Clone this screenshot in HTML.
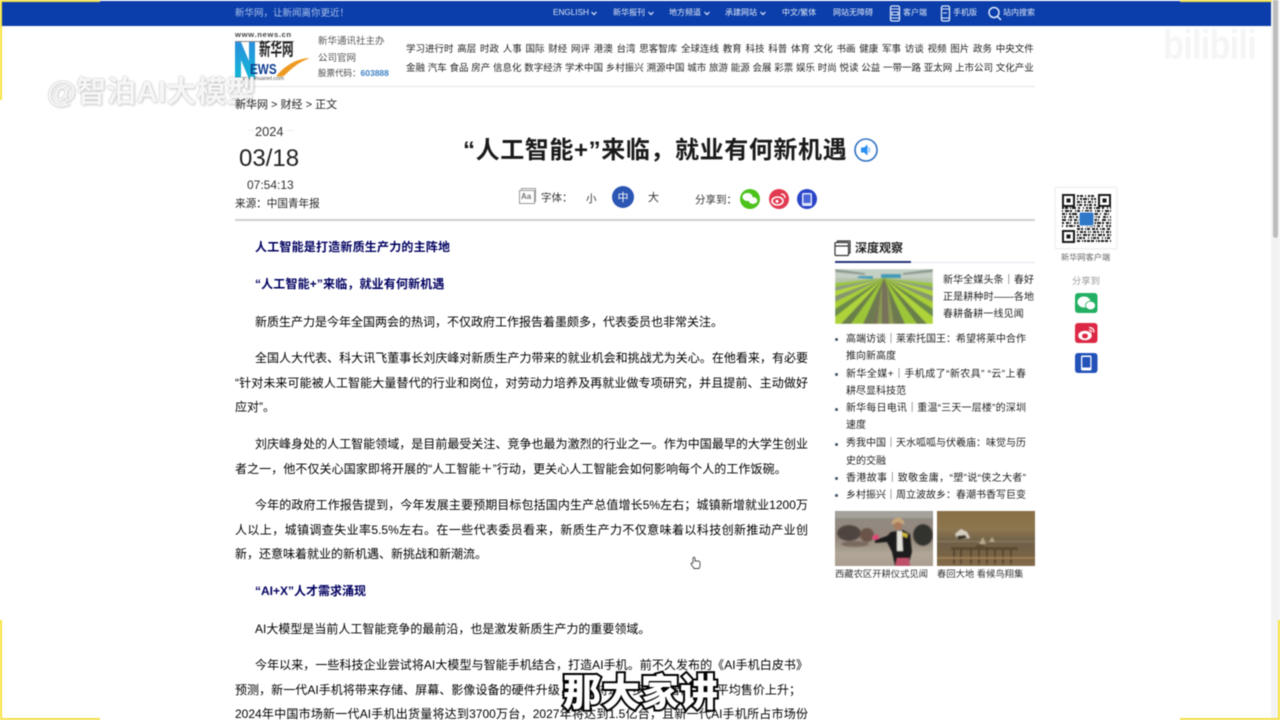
<!DOCTYPE html>
<html lang="zh-CN">
<head>
<meta charset="utf-8">
<title>“人工智能+”来临，就业有何新机遇</title>
<style>
html,body{margin:0;padding:0;background:#fff;}
body{width:1280px;height:720px;overflow:hidden;position:relative;font-family:"Liberation Sans","Noto Sans CJK SC",sans-serif;color:#222;}
#p{position:absolute;left:0;top:0;width:1280px;height:720px;overflow:hidden;filter:blur(.4px);}
.a{position:absolute;}
.t{position:absolute;white-space:nowrap;line-height:20px;}
.l{position:absolute;font-size:12px;line-height:20px;height:20px;color:#000;white-space:nowrap;}
.j{text-align:justify;text-align-last:justify;}
.b{font-weight:bold;color:#000060;}
.w{color:#dfe8f8;font-size:8px;}
.row{position:absolute;left:406px;width:628px;display:flex;justify-content:space-between;font-size:9.5px;line-height:16px;color:#222;white-space:nowrap;}
.s{font-size:10px;color:#222;height:20px;}
.sj{text-align:justify;text-align-last:justify;}
.dot{position:absolute;left:835px;width:3px;height:3px;border-radius:50%;background:#456;}
</style>
</head>
<body>
<div id="p">
<!-- top bar -->
<div class="a" style="left:2px;top:1px;width:1269px;height:25px;background:#0b3eaa;"></div>
<div class="t" style="left:235px;top:4px;font-size:9.500px;color:#a9c2ec;">新华网，让新闻离你更近！</div>
<div class="t w" style="left:553px;top:3px;font-size:8.200px;">ENGLISH</div>
<div class="t w" style="left:613px;top:3px;">新华报刊</div>
<div class="t w" style="left:669px;top:3px;">地方频道</div>
<div class="t w" style="left:725px;top:3px;">承建网站</div>
<div class="t w" style="left:782px;top:3px;">中文/繁体</div>
<div class="t w" style="left:833px;top:3px;">网站无障碍</div>
<div class="t w" style="left:903px;top:3px;">客户端</div>
<div class="t w" style="left:953px;top:3px;">手机版</div>
<div class="t w" style="left:1003px;top:3px;">站内搜索</div>
<svg class="a" style="left:0;top:0" width="1280" height="30" fill="none" stroke="#dfe8f8">
<path d="M591.5 12l2.5 2.500 2.500-2.500M648.500 12l2.500 2.500 2.500-2.500M704.500 12l2.500 2.500 2.500-2.500M760.500 12l2.500 2.500 2.500-2.500" stroke-width="1.200"/>
<rect x="890.500" y="6" width="9" height="15" rx="1.500" stroke-width="1.300"/>
<path d="M891 9h8M891 18h8M892 12h6v3h-6z" stroke-width="1"/>
<rect x="941.500" y="6" width="8" height="15" rx="1.500" stroke-width="1.300"/>
<path d="M942 9h7M942 18h7M943 13h4" stroke-width="1"/>
<circle cx="994" cy="12.500" r="5" stroke-width="1.500"/><path d="M997.500 16.500l3.500 3.500" stroke-width="1.500"/>
</svg>

<!-- logo -->
<div class="t" style="left:235px;top:25px;font-size:7.700px;font-weight:bold;color:#444;letter-spacing:.6px;">www.news.cn</div>
<div class="a" style="left:235px;top:41px;width:59px;height:1px;background:#888;"></div>
<svg class="a" style="left:235px;top:41px" width="78" height="42">
<defs><linearGradient id="g1" x1="0" y1="0" x2="0" y2="1"><stop offset="0" stop-color="#2a8fdc"/><stop offset="1" stop-color="#12b8d8"/></linearGradient></defs>
<path d="M0 1h6l8 19V1h6v37H14L6 19v19H0z" fill="url(#g1)"/>
<path d="M43 33C52 23 64 17 75 17 64 21 57 27 50 34c-2 2-6 2-9 1 1 0 1-1 2-2z" fill="#ee9a22"/>
</svg>
<div class="t" style="left:259px;top:41px;font-size:11.500px;font-weight:bold;color:#222;transform:scaleY(1.55);transform-origin:left center;">新华网</div>
<div class="t" style="left:250px;top:60px;font-size:15px;font-weight:bold;color:#0f3f90;transform:scaleX(.78);transform-origin:left center;">EWS</div>
<div class="t" style="left:235px;top:69px;font-size:5.500px;color:#555;">www.xinhuanet.com</div>

<div class="t" style="left:318px;top:32px;font-size:9.500px;color:#555;">新华通讯社主办</div>
<div class="t" style="left:318px;top:49px;font-size:9.500px;color:#555;">公司官网</div>
<div class="t" style="left:318px;top:63px;font-size:8.500px;color:#444;">股票代码：<span style="color:#3f82c4;font-weight:bold;">603888</span></div>

<div class="row" style="top:42px;"><span>学习进行时</span><span>高层</span><span>时政</span><span>人事</span><span>国际</span><span>财经</span><span>网评</span><span>港澳</span><span>台湾</span><span>思客智库</span><span>全球连线</span><span>教育</span><span>科技</span><span>科普</span><span>体育</span><span>文化</span><span>书画</span><span>健康</span><span>军事</span><span>访谈</span><span>视频</span><span>图片</span><span>政务</span><span>中央文件</span></div>
<div class="row" style="top:61px;"><span>金融</span><span>汽车</span><span>食品</span><span>房产</span><span>信息化</span><span>数字经济</span><span>学术中国</span><span>乡村振兴</span><span>溯源中国</span><span>城市</span><span>旅游</span><span>能源</span><span>会展</span><span>彩票</span><span>娱乐</span><span>时尚</span><span>悦读</span><span>公益</span><span>一带一路</span><span>亚太网</span><span>上市公司</span><span>文化产业</span></div>

<div class="a" style="left:235px;top:86px;width:800px;height:1px;background:#e6e6e6;"></div>

<!-- date -->
<div class="t" style="left:255px;top:122px;font-size:12.800px;color:#333;">2024</div>
<div class="a" style="left:247px;top:130px;width:7px;height:1px;background:#eee;"></div>
<div class="a" style="left:286px;top:130px;width:8px;height:1px;background:#eee;"></div>
<div class="t" style="left:239px;top:149px;font-size:24px;color:#222;">03/18</div>
<div class="t" style="left:247px;top:175px;font-size:12px;color:#333;">07:54:13</div>
<div class="t" style="left:235px;top:194px;font-size:10.600px;color:#222;">来源：中国青年报</div>

<!-- title -->
<div class="t" style="left:463px;top:139px;font-size:24px;line-height:24px;font-weight:bold;color:#1a1a1a;letter-spacing:.6px;">“人工智能+”来临，就业有何新机遇</div>
<svg class="a" style="left:853px;top:137px" width="26" height="26">
<circle cx="13" cy="13" r="11" fill="#fff" stroke="#2e70c2" stroke-width="1.600"/>
<path d="M8 10.500h3l3.500-3v11l-3.500-3H8z" fill="#2b8df0"/><path d="M15.500 10.500q2 2.500 0 5" fill="none" stroke="#7cb8f2" stroke-width="1.300"/>
</svg>

<!-- toolbar -->
<svg class="a" style="left:518px;top:187px" width="20" height="19" fill="none" stroke="#999">
<path d="M3.500 3.500V1.500h14v13h-1.500" stroke-width="1"/>
<rect x="1.500" y="3.500" width="15" height="13" fill="#fff" stroke-width="1"/>
</svg>
<div class="t" style="left:521px;top:187px;font-size:8px;font-weight:bold;color:#777;">Aa</div>
<div class="t" style="left:541px;top:188px;font-size:10.500px;color:#333;">字体：</div>
<div class="t" style="left:586px;top:189px;font-size:10.500px;color:#333;">小</div>
<div class="a" style="left:612px;top:186px;width:22px;height:22px;border-radius:50%;background:#2b56b4;"></div>
<div class="t" style="left:617.500px;top:188px;font-size:11px;color:#fff;">中</div>
<div class="t" style="left:648px;top:188px;font-size:11px;color:#333;">大</div>
<div class="t" style="left:695px;top:190px;font-size:10.500px;color:#333;">分享到：</div>
<svg class="a" style="left:738px;top:187px" width="82" height="24">
<circle cx="12" cy="12" r="10" fill="#4cc31c"/>
<ellipse cx="9.500" cy="10" rx="5" ry="4" fill="#fff"/><ellipse cx="15" cy="13.500" rx="4.300" ry="3.400" fill="#fff"/>
<circle cx="41" cy="12" r="10" fill="#e23a50"/>
<ellipse cx="39.500" cy="14" rx="5.500" ry="4" fill="none" stroke="#fff" stroke-width="1.600"/><circle cx="39" cy="14.300" r="1.500" fill="#fff"/><path d="M43 7q4 0 4 4" fill="none" stroke="#fff" stroke-width="1.300"/>
<circle cx="69" cy="12" r="10" fill="#2b45c8"/>
<rect x="64" y="6" width="10" height="13" rx="1.500" fill="#dfe6fa"/><rect x="65.500" y="7.500" width="7" height="8.500" fill="#4a66d8"/>
</svg>
<div class="a" style="left:235px;top:219px;width:800px;height:2px;background:#cfcfcf;"></div>

<!-- article -->
<div class="l b" style="left:255px;top:237px;width:195px;" ><span style="letter-spacing:.2px">人工智能是打造新质生产力的主阵地</span></div>
<div class="l b" style="left:255px;top:274px;letter-spacing:.15px;">“人工智能+”来临，就业有何新机遇</div>
<div class="l" style="left:255px;top:312px;">新质生产力是今年全国两会的热词，不仅政府工作报告着墨颇多，代表委员也非常关注。</div>
<div class="l j" style="left:255px;top:348px;width:553px;">全国人大代表、科大讯飞董事长刘庆峰对新质生产力带来的就业机会和挑战尤为关心。在他看来，有必要</div>
<div class="l j" style="left:235px;top:373px;width:573px;">“针对未来可能被人工智能大量替代的行业和岗位，对劳动力培养及再就业做专项研究，并且提前、主动做好</div>
<div class="l" style="left:235px;top:397px;">应对”。</div>
<div class="l j" style="left:255px;top:434px;width:553px;">刘庆峰身处的人工智能领域，是目前最受关注、竞争也最为激烈的行业之一。作为中国最早的大学生创业</div>
<div class="l" style="left:235px;top:459px;letter-spacing:.08px;">者之一，他不仅关心国家即将开展的“人工智能＋”行动，更关心人工智能会如何影响每个人的工作饭碗。</div>
<div class="l j" style="left:255px;top:495px;width:553px;">今年的政府工作报告提到，今年发展主要预期目标包括国内生产总值增长5%左右；城镇新增就业1200万</div>
<div class="l j" style="left:235px;top:520px;width:573px;">人以上，城镇调查失业率5.5%左右。在一些代表委员看来，新质生产力不仅意味着以科技创新推动产业创</div>
<div class="l" style="left:235px;top:544px;">新，还意味着就业的新机遇、新挑战和新潮流。</div>
<div class="l b" style="left:255px;top:581px;">“AI+X”人才需求涌现</div>
<div class="l" style="left:255px;top:619px;">AI大模型是当前人工智能竞争的最前沿，也是激发新质生产力的重要领域。</div>
<div class="l j" style="left:255px;top:655px;width:553px;">今年以来，一些科技企业尝试将AI大模型与智能手机结合，打造AI手机。前不久发布的《AI手机白皮书》</div>
<div class="l j" style="left:235px;top:680px;width:566px;">预测，新一代AI手机将带来存储、屏幕、影像设备的硬件升级，这也将进一步推动智能手机平均售价上升；</div>
<div class="l j" style="left:235px;top:704px;width:573px;">2024年中国市场新一代AI手机出货量将达到3700万台，2027年将达到1.5亿台，且新一代AI手机所占市场份</div>

<!-- sidebar -->
<svg class="a" style="left:834px;top:240px" width="18" height="17" fill="none" stroke="#333" stroke-width="1.200">
<path d="M3.500 2.500V1h12.500v12h-1.500"/><rect x="1" y="2.500" width="13.500" height="13" rx="1"/><path d="M1 6h13.500"/>
</svg>
<div class="t" style="left:855px;top:238px;font-size:12px;font-weight:bold;color:#222;">深度观察</div>
<div class="a" style="left:835px;top:262px;width:200px;height:1px;background:#e4e6ec;"></div>
<div class="a" style="left:835px;top:261px;width:76px;height:2px;background:#27337a;"></div>

<svg class="a" style="left:835px;top:269px" width="98" height="55" viewBox="0 0 98 55">
<defs>
<filter id="bl" x="-5%" y="-5%" width="110%" height="110%"><feGaussianBlur stdDeviation=".5"/></filter>
<filter id="bl2" x="-5%" y="-5%" width="110%" height="110%"><feGaussianBlur stdDeviation=".9"/></filter>
<clipPath id="c1"><rect width="98" height="55"/></clipPath>
<g id="fan">
<polygon points="49,9 0,8 0,14" fill="#b7c4ae"/>
<polygon points="49,9 0,14 0,18" fill="#9dc640"/>
<polygon points="49,9 0,18 0,22" fill="#8b9d82"/>
<polygon points="49,9 0,22 0,27" fill="#b3d63c"/>
<polygon points="49,9 0,27 0,33" fill="#86966f"/>
<polygon points="49,9 0,33 0,40" fill="#a8cf38"/>
<polygon points="49,9 0,40 0,48" fill="#6c8a4a"/>
<polygon points="49,9 0,48 0,55 6,55" fill="#aed33a"/>
<polygon points="49,9 6,55 16,55" fill="#6a7f48"/>
<polygon points="49,9 16,55 28,55" fill="#9cc638"/>
<polygon points="49,9 28,55 38,55" fill="#6d7a50"/>
</g>
</defs>
<g clip-path="url(#c1)"><g filter="url(#bl)">
<rect width="98" height="55" fill="#9fbf3f"/>
<use href="#fan"/>
<use href="#fan" transform="translate(98,0) scale(-1,1)"/>
<polygon points="49,9 38,55 60,55" fill="#77705a"/>
<polygon points="47,14 42,55 47,55" fill="#8b9a52"/>
<polygon points="52,14 54,55 59,55" fill="#8b9a52"/>
<rect width="98" height="9" fill="#c5d0c4"/>
<path d="M24 7l14 0 0 3-16-1zM46 5h20v4H46z" fill="#3e9bb8"/>
<path d="M0 3l30 3V4L0 0zM98 3L68 6V4L98 0z" fill="#8d9a90"/>
</g></g>
</svg>
<div class="t s sj" style="left:943px;top:271px;width:91px;">新华全媒头条｜春好</div>
<div class="t s sj" style="left:943px;top:288px;width:91px;">正是耕种时——各地</div>
<div class="t s" style="left:943px;top:305px;letter-spacing:.1px;">春耕备耕一线见闻</div>

<div class="dot" style="top:338px;"></div>
<div class="t s" style="left:846px;top:330px;">高端访谈｜莱索托国王：希望将莱中合作</div>
<div class="t s" style="left:846px;top:347px;">推向新高度</div>
<div class="dot" style="top:373px;"></div>
<div class="t s sj" style="left:846px;top:365px;width:180px;">新华全媒+｜手机成了“新农具” “云”上春</div>
<div class="t s" style="left:846px;top:382px;">耕尽显科技范</div>
<div class="dot" style="top:408px;"></div>
<div class="t s sj" style="left:846px;top:399px;width:180px;">新华每日电讯｜重温“三天一层楼”的深圳</div>
<div class="t s" style="left:846px;top:416px;">速度</div>
<div class="dot" style="top:443px;"></div>
<div class="t s" style="left:846px;top:434px;">秀我中国｜天水呱呱与伏羲庙：味觉与历</div>
<div class="t s" style="left:846px;top:452px;">史的交融</div>
<div class="dot" style="top:477px;"></div>
<div class="t s sj" style="left:846px;top:469px;width:180px;">香港故事｜致敬金庸，“塑”说“侠之大者”</div>
<div class="dot" style="top:494px;"></div>
<div class="t s" style="left:846px;top:486px;">乡村振兴｜周立波故乡：春潮书香写巨变</div>

<svg class="a" style="left:835px;top:511px" width="98" height="55" viewBox="0 0 98 55">
<defs><linearGradient id="g2" x1="0" y1="0" x2="0" y2="1"><stop offset="0" stop-color="#8f8b84"/><stop offset=".5" stop-color="#94877c"/><stop offset=".75" stop-color="#b0a698"/><stop offset="1" stop-color="#a89c8d"/></linearGradient>
<clipPath id="c2"><rect width="98" height="55"/></clipPath></defs>
<g clip-path="url(#c2)"><g filter="url(#bl2)">
<rect x="-3" y="-3" width="104" height="61" fill="url(#g2)"/>
<rect x="0" y="0" width="98" height="7" fill="#a5a29c"/>
<ellipse cx="14" cy="22" rx="12" ry="8" fill="#4f4440"/>
<ellipse cx="32" cy="24" rx="7" ry="7" fill="#6a524a"/>
<ellipse cx="88" cy="24" rx="10" ry="11" fill="#33302f"/>
<ellipse cx="20" cy="33" rx="14" ry="3" fill="#7a6a5e"/>
</g>
<g filter="url(#bl)">
<path d="M58 9q5-5 10 0l2 4H56z" fill="#c8a67c"/>
<circle cx="63" cy="15" r="4" fill="#a87a5c"/>
<path d="M56 21l12-2 7 4 2 18-4 14H60l-3-14-5-10-12 1v-3l12-4z" fill="#1f1d1f"/>
<path d="M62 20h5l1 20h-6z" fill="#e5e2da"/>
<path d="M67 21l6 2-1 4-5-2z" fill="#c9b53a"/>
<path d="M37 25l6-2 1 5-6 1z" fill="#e04a78"/><path d="M62 47h12l1 8H60z" fill="#c0506a"/>
</g></g>
</svg>
<svg class="a" style="left:937px;top:511px" width="98" height="55" viewBox="0 0 98 55">
<defs><linearGradient id="g3" x1="0" y1="0" x2="0" y2="1"><stop offset="0" stop-color="#8a6e42"/><stop offset=".35" stop-color="#8c7650"/><stop offset=".55" stop-color="#6f6048"/><stop offset=".8" stop-color="#7a6344"/><stop offset="1" stop-color="#86704e"/></linearGradient>
<clipPath id="c3"><rect width="98" height="55"/></clipPath></defs>
<g clip-path="url(#c3)"><g filter="url(#bl)">
<rect x="-3" y="-3" width="104" height="61" fill="url(#g3)"/>
<path d="M18 23l6-5 6 3 3 6-12 2z" fill="#d6cfc0"/><path d="M20 25l8-1 2 3-9 2z" fill="#3b3226"/>
<path d="M14 36h24l3-3 8 3h32v3H14z" fill="#5c4a33"/>
<path d="M0 30h98v1H0z" fill="#8e8166"/>
<path d="M17 38v15M24 38v15M34 38v15M42 38v15M50 36v17M58 38v15M66 38v15M74 38v15" stroke="#4c3d2a" stroke-width="1.500"/>
<path d="M42 33l4-7 3 7zM52 31l3-5 3 5z" fill="#b8a78a"/>
<path d="M0 46h98v2H0z" fill="#9c7f55"/>
</g></g>
</svg>
<div class="t" style="left:835px;top:564px;font-size:9.300px;color:#333;">西藏农区开耕仪式见闻</div>
<div class="t" style="left:937px;top:564px;font-size:9.300px;color:#333;">春回大地 看候鸟翔集</div>

<!-- floating share -->
<div class="a" style="left:1055px;top:187px;width:60px;height:60px;border:1px solid #efefef;box-shadow:0 0 2px #eee;"></div>
<svg class="a" style="left:1062px;top:194px" width="49" height="49" viewBox="0 0 49 49" fill="none" stroke="#1a1a1a" stroke-width="2">
<path d="M0 14h49" stroke-dasharray="2 1 3 2 1 1 4 2 2 3 1 2"/>
<path d="M0 17h49" stroke-dasharray="1 2 4 1 2 3 1 1 3 2"/>
<path d="M0 20h49" stroke-dasharray="3 1 1 2 2 1 5 2 1 3"/>
<path d="M0 23h49" stroke-dasharray="1 1 2 3 3 1 1 2 2 1"/>
<path d="M0 26h49" stroke-dasharray="4 2 1 1 2 2 3 1 1 3"/>
<path d="M0 29h49" stroke-dasharray="2 2 3 1 1 3 2 1 4 1"/>
<path d="M0 32h49" stroke-dasharray="1 3 2 1 4 1 1 2 3 2"/>
<path d="M15 2h19" stroke-dasharray="2 1 3 2 1 2"/>
<path d="M15 5h19" stroke-dasharray="1 2 2 1 4 1"/>
<path d="M15 8h19" stroke-dasharray="3 1 1 2 2 2"/>
<path d="M15 11h19" stroke-dasharray="1 1 3 2 2 1"/>
<path d="M15 35h34" stroke-dasharray="3 1 2 2 1 1 3 2"/>
<path d="M15 38h34" stroke-dasharray="1 2 3 1 2 2 1 1"/>
<path d="M15 41h34" stroke-dasharray="2 1 1 2 4 1 2 2"/>
<path d="M15 44h34" stroke-dasharray="1 1 3 1 2 3 1 2"/>
<path d="M15 47h34" stroke-dasharray="3 2 1 1 2 1 3 1"/>
<rect x="1" y="1" width="11" height="11"/><rect x="37" y="1" width="11" height="11"/><rect x="1" y="37" width="11" height="11"/>
<rect x="4.500" y="4.500" width="4" height="4" fill="#1a1a1a" stroke="none"/><rect x="40.500" y="4.500" width="4" height="4" fill="#1a1a1a" stroke="none"/><rect x="4.500" y="40.500" width="4" height="4" fill="#1a1a1a" stroke="none"/>
<rect x="17" y="18" width="15" height="14" rx="2" fill="#2f78c8" stroke="#fff" stroke-width="1"/>
</svg>
<div class="t" style="left:1061px;top:248px;font-size:8.200px;color:#666;">新华网客户端</div>
<div class="t" style="left:1072px;top:271px;font-size:9.300px;color:#999;">分享到</div>
<svg class="a" style="left:1075px;top:293px" width="23" height="81">
<rect width="22.500" height="20" rx="3" fill="#23b063"/>
<ellipse cx="9" cy="9" rx="6.500" ry="5.500" fill="#fff"/><ellipse cx="15.500" cy="12.500" rx="5" ry="4.300" fill="#fff" stroke="#23b063" stroke-width=".8"/>
<rect y="30" width="22.500" height="20" rx="3" fill="#dc2845"/>
<ellipse cx="10" cy="42.500" rx="6.800" ry="4.800" fill="#fff"/><ellipse cx="10" cy="43" rx="3" ry="2.400" fill="#dc2845"/>
<path d="M14 34.500q5 0 5 5M14 37q2.500 0 2.500 2.500" fill="none" stroke="#fff" stroke-width="1.200"/>
<rect y="60" width="22.500" height="20" rx="3" fill="#2352b8"/>
<rect x="6" y="62.500" width="10.500" height="15" rx="1.500" fill="#fff"/><rect x="7.300" y="64" width="8" height="10.500" fill="#2352b8"/>
</svg>

<!-- cursor -->
<svg class="a" style="left:690px;top:556px" width="11" height="14" fill="#fff" stroke="#444" stroke-width=".9">
<path d="M3 6V2q1-1.500 2 0v3h3.500q1.500.5 1.500 2v3l-1 2.500H4L1 8q0-1.500 2-1z"/>
</svg>

<!-- scrollbar -->
<div class="a" style="left:1271px;top:0;width:9px;height:720px;background:#f3f3f3;"></div>
<div class="a" style="left:1273px;top:0;width:5px;height:238px;background:#bdbdbd;border-radius:0 0 3px 3px;"></div>

<!-- recording corners -->
<div class="a" style="left:0;top:0;width:100px;height:1.500px;background:#f3e04a;"></div>
<div class="a" style="left:0;top:0;width:2px;height:100px;background:#f7e23c;"></div>
<div class="a" style="left:0;top:620px;width:2px;height:100px;background:#f7e23c;"></div>
<div class="a" style="left:0;top:718px;width:100px;height:2px;background:#f3e04a;"></div>
<div class="a" style="left:1180px;top:0;width:92px;height:1.500px;background:#f3e04a;"></div>
<div class="a" style="left:1180px;top:718px;width:100px;height:2px;background:#f3e04a;"></div>
<div class="a" style="left:1278px;top:620px;width:2px;height:100px;background:#f7e23c;"></div>

<!-- watermarks -->
<div class="t" style="left:47px;top:77px;font-size:30px;line-height:32px;font-weight:bold;color:#f6f6f6;text-shadow:1px 1px 2px rgba(0,0,0,.22),-1px 0 1px rgba(0,0,0,.1),0 -1px 1px rgba(0,0,0,.08);">@智泊AI大模型</div>
<div class="t" style="left:1163px;top:20px;font-size:42px;line-height:50px;font-weight:bold;color:rgba(235,235,235,.5);letter-spacing:-1px;transform:scaleX(.82);transform-origin:left center;">bilibili</div>

<!-- breadcrumb drawn above the watermark -->
<div class="t" style="left:235px;top:95px;font-size:11px;color:#222;">新华网 &gt; 财经 &gt; 正文</div>

<!-- subtitle -->
<div class="t" style="left:563px;top:671px;font-size:38px;line-height:46px;font-weight:900;color:#fff;letter-spacing:1px;-webkit-text-stroke:4px #000;paint-order:stroke fill;">那大家讲</div>
</div>
</body>
</html>
